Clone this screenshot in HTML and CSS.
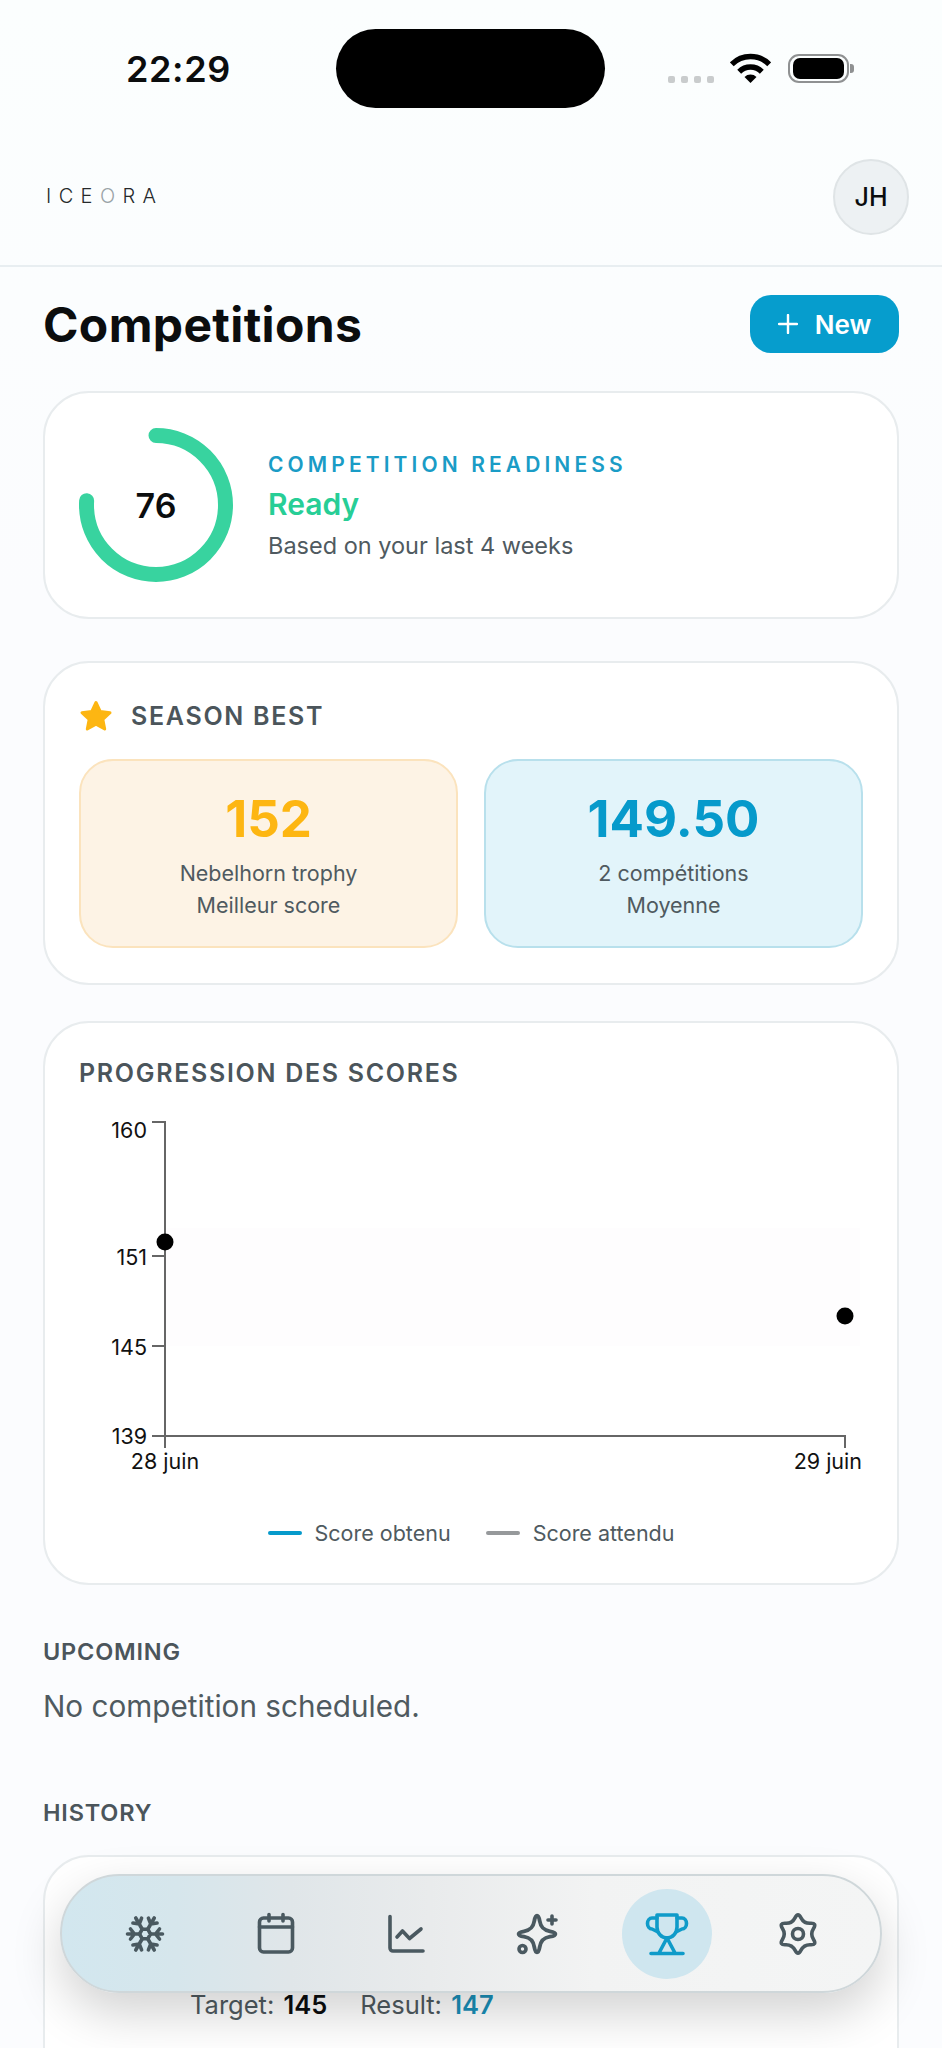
FILE: index.html
```html
<!DOCTYPE html>
<html lang="fr">
<head>
  <meta charset="UTF-8">
  <meta name="viewport" content="width=device-width, initial-scale=1.0">
  <title>Competitions</title>
  <link rel="stylesheet" href="styles.css">
</head>
<body>
  <div class="status-bar">
    <span class="status-time">22:29</span>
    <div class="status-island"></div>
    <div class="status-icons">
      <div class="signal-dots"><i></i><i></i><i></i><i></i></div>
      <svg class="wifi" width="41" height="30" viewBox="0 0 41 30">
        <path d="M1.76 11.26A26.5 26.5 0 0 1 39.24 11.26M9.19 18.69A16 16 0 0 1 31.81 18.69" fill="none" stroke="#000" stroke-width="5.5"/>
        <path d="M20.5 30L14.5 24A8.5 8.5 0 0 1 26.5 24Z" fill="#000"/>
      </svg>
      <div class="battery"><div class="battery-level"></div></div>
      <div class="battery-cap"></div>
    </div>
  </div>

  <header class="app-header">
    <div class="logo">ICE<span class="logo-o">O</span>RA</div>
    <div class="avatar">JH</div>
  </header>

  <main class="content">
    <div class="title-row">
      <h1>Competitions</h1>
      <button class="new-btn" type="button">
        <svg width="20" height="20" viewBox="0 0 20 20"><path d="M10 1V19M1 10H19" stroke="#fff" stroke-width="2.4" stroke-linecap="round"/></svg>
        New
      </button>
    </div>

    <section class="card readiness">
      <div class="ring">
        <svg width="154" height="154" viewBox="0 0 154 154">
          <circle class="ring-arc" cx="77" cy="77" r="69.5" pathLength="100" stroke-dasharray="76 100" transform="rotate(-90 77 77)"/>
        </svg>
        <span class="ring-value">76</span>
      </div>
      <div class="readiness-text">
        <div class="readiness-label">COMPETITION READINESS</div>
        <div class="readiness-status">Ready</div>
        <div class="readiness-note">Based on your last 4 weeks</div>
      </div>
    </section>

    <section class="card season">
      <div class="card-title season-title">
        <svg width="34" height="32" viewBox="0 0 34 32"><path d="M17 2.5L21.2 11.4L31 12.7L23.8 19.4L25.7 29L17 24.3L8.3 29L10.2 19.4L3 12.7L12.8 11.4Z" fill="#fdb612" stroke="#fdb612" stroke-width="3" stroke-linejoin="round"/></svg>
        SEASON BEST
      </div>
      <div class="best-grid">
        <div class="best-box best-orange">
          <div class="best-num">152</div>
          <div class="best-sub">Nebelhorn trophy</div>
          <div class="best-sub">Meilleur score</div>
        </div>
        <div class="best-box best-blue">
          <div class="best-num">149.50</div>
          <div class="best-sub">2 compétitions</div>
          <div class="best-sub">Moyenne</div>
        </div>
      </div>
    </section>

    <section class="card progress">
      <div class="card-title">PROGRESSION DES SCORES</div>
      <svg class="chart" width="784" height="378" viewBox="0 0 784 378">
        <rect x="86" y="128" width="695" height="118" fill="#fefdfe"/>
        <path d="M73 22H86V336H766V348M73 156H86M73 246H86M73 336H86M86 336V348" fill="none" stroke="#666" stroke-width="2"/>
        <circle cx="86" cy="142" r="8.5" fill="#000"/>
        <circle cx="766" cy="216" r="8.5" fill="#000"/>
        <text x="68" y="38" text-anchor="end">160</text>
        <text x="68" y="165" text-anchor="end">151</text>
        <text x="68" y="255" text-anchor="end">145</text>
        <text x="68" y="344" text-anchor="end">139</text>
        <text x="86" y="369" text-anchor="middle">28 juin</text>
        <text x="783" y="369" text-anchor="end">29 juin</text>
      </svg>
      <div class="legend">
        <div class="legend-item"><i class="legend-line line-blue"></i>Score obtenu</div>
        <div class="legend-item"><i class="legend-line line-gray"></i>Score attendu</div>
      </div>
    </section>

    <h2 class="section-title upcoming-title">UPCOMING</h2>
    <p class="empty-note">No competition scheduled.</p>

    <h2 class="section-title history-title">HISTORY</h2>
    <section class="card history">
      <div class="history-line">
        <span>Target: <b>145</b></span>
        <span>Result: <b class="result">147</b></span>
      </div>
    </section>
  </main>

  <nav class="tab-bar">
    <div class="tab">
      <svg width="44" height="44" viewBox="0 0 44 44" class="tab-icon">
        <g transform="rotate(90 22 22)">
          <path d="M22 16.5L26.8 19.25V24.75L22 27.5L17.2 24.75V19.25Z"/>
          <path d="M22 16.500V4.500M17 7.500L22 11.500L27 7.500"/>
          <path transform="rotate(60 22 22)" d="M22 16.500V3.500M17 6.500L22 10.500L27 6.500"/>
          <path transform="rotate(120 22 22)" d="M22 16.500V3.500M17 6.500L22 10.500L27 6.500"/>
          <path transform="rotate(180 22 22)" d="M22 16.500V4.500M17 7.500L22 11.500L27 7.500"/>
          <path transform="rotate(240 22 22)" d="M22 16.500V3.500M17 6.500L22 10.500L27 6.500"/>
          <path transform="rotate(300 22 22)" d="M22 16.500V3.500M17 6.500L22 10.500L27 6.500"/>
        </g>
      </svg>
    </div>
    <div class="tab">
      <svg width="44" height="44" viewBox="0 0 44 44" class="tab-icon">
        <rect x="5.5" y="6" width="33" height="34" rx="4"/>
        <path d="M5.5 15H38.5M15 2.5V9M29 2.5V9"/>
      </svg>
    </div>
    <div class="tab">
      <svg width="44" height="44" viewBox="0 0 44 44" class="tab-icon">
        <path d="M6 4.5V36A3 3 0 0 0 9 39H39"/>
        <path d="M13 25L18.5 19L25.5 26.5L37 17"/>
      </svg>
    </div>
    <div class="tab">
      <svg width="44" height="44" viewBox="0 0 44 44" class="tab-icon">
        <path d="M21 6C22.500 6 23 8 23.500 11C24.500 17 27 19.500 33 20.500C36 21 38 21.500 38 23S36 25 33 25.500C27 26.500 24.500 29 23.500 35C23 38 22.500 40 21 40S19 38 18.500 35C17.500 29 15 26.500 9 25.500C6 25 4 24.500 4 23S6 21 9 20.500C15 19.500 17.500 17 18.500 11C19 8 19.500 6 21 6Z" transform="translate(22 22) scale(1.08) translate(-21 -23)"/>
        <path d="M37 4V12M33 8H41"/>
        <circle cx="7.500" cy="37" r="3.500"/>
      </svg>
    </div>
    <div class="tab tab-active">
      <svg width="44" height="44" viewBox="0 0 44 44" class="tab-icon">
        <path d="M12 3H32V15A10 11 0 0 1 12 15Z"/>
        <path d="M12 6H7A4.500 5.500 0 0 0 7 17L13 20M32 6H37A4.500 5.500 0 0 1 37 17L31 20"/>
        <path d="M22 26L14 41M22 26L30 41M6 41.500H38"/>
      </svg>
    </div>
    <div class="tab">
      <svg width="44" height="44" viewBox="0 0 44 44" class="tab-icon">
        <path transform="translate(22 22)" d="M3 -16.2Q6 -10.39 12.53 -10.7Q19.05 -11 15.53 -5.5Q12 0 15.53 5.5Q19.05 11 12.53 10.7Q6 10.39 3 16.2Q0 22 -3 16.2Q-6 10.39 -12.53 10.7Q-19.05 11 -15.53 5.5Q-12 0 -15.53 -5.5Q-19.05 -11 -12.53 -10.7Q-6 -10.39 -3 -16.2Q0 -22 3 -16.2Z"/>
        <circle cx="22" cy="22" r="5.500"/>
      </svg>
    </div>
  </nav>
</body>
</html>
```

FILE: styles.css
```css
html, body {
  height: 2048px;
  overflow: hidden;
}

body {
  margin: 0;
  position: relative;
  background: linear-gradient(180deg, #fbfefe 0, #fbfcfe 600px);
  font-family: Inter, "Noto Sans", sans-serif;
  color: #0b0d0e;
}

/* status bar */
.status-bar {
  height: 121px;
  display: grid;
  grid-template-columns: 336px 269px 1fr;
  box-sizing: border-box;
  padding-top: 29px;
}

.status-time {
  padding-left: 126px;
  font-size: 36px;
  font-weight: 600;
  line-height: 80px;
  letter-spacing: 0.6px;
}

.status-island {
  height: 79px;
  border-radius: 40px;
  background-color: #000;
}

.status-icons {
  display: flex;
  align-items: flex-end;
  height: 54px;
  padding-left: 63px;
}

.signal-dots {
  display: flex;
  gap: 6px;
}

.signal-dots i {
  width: 7px;
  height: 7px;
  border-radius: 2px;
  background-color: #c9cccd;
}

.wifi {
  margin-left: 16px;
}

.battery {
  margin-left: 17px;
  width: 61px;
  height: 29px;
  box-sizing: border-box;
  padding: 2px 3px;
  border: 2px solid #8f9192;
  border-radius: 11px;
}

.battery-level {
  height: 100%;
  border-radius: 7px;
  background-color: #000;
}

.battery-cap {
  width: 4px;
  height: 9px;
  margin: 0 0 10px 1px;
  border-radius: 0 3px 3px 0;
  background-color: #8f9192;
}

/* header */
.app-header {
  height: 146px;
  box-sizing: border-box;
  padding: 8px 33px 0 46px;
  display: flex;
  justify-content: space-between;
  align-items: center;
  border-bottom: 2px solid #e8eef1;
}

.logo {
  font-size: 20px;
  font-weight: 300;
  letter-spacing: 7.4px;
  color: #25292b;
  margin-top: -2px;
}

.logo-o {
  color: #9aa3a7;
}

.avatar {
  width: 76px;
  height: 76px;
  box-sizing: border-box;
  border: 2px solid #dfe4e6;
  border-radius: 50%;
  background-color: #edf1f3;
  display: flex;
  align-items: center;
  justify-content: center;
  font-size: 25px;
  font-weight: 500;
}

/* page */
.content {
  padding: 28px 43px 0;
}

.title-row {
  height: 58px;
  display: flex;
  justify-content: space-between;
  align-items: center;
}

h1 {
  margin: 0;
  font-size: 48px;
  font-weight: 700;
  letter-spacing: 0.35px;
}

.new-btn {
  width: 149px;
  height: 58px;
  border: none;
  border-radius: 21px;
  background-color: #069dcd;
  color: #fff;
  font-family: inherit;
  font-size: 26px;
  font-weight: 600;
  display: flex;
  align-items: center;
  justify-content: center;
  gap: 17px;
}

.card {
  box-sizing: border-box;
  border: 2px solid #e8ecee;
  border-radius: 46px;
  background-color: #fff;
}

.card-title {
  font-size: 25px;
  font-weight: 600;
  line-height: 30px;
  letter-spacing: 1.7px;
  color: #4b555b;
}

/* readiness */
.readiness {
  margin-top: 38px;
  height: 228px;
  padding: 0 34px;
  display: flex;
  align-items: center;
  gap: 35px;
}

.ring {
  position: relative;
  width: 154px;
  height: 154px;
}

.ring-arc {
  fill: none;
  stroke: #38d39f;
  stroke-width: 15;
  stroke-linecap: round;
}

.ring-value {
  position: absolute;
  inset: 0;
  display: flex;
  align-items: center;
  justify-content: center;
  font-size: 34px;
  font-weight: 600;
}

.readiness-text {
  padding-top: 3px;
}

.readiness-label {
  font-size: 21px;
  font-weight: 600;
  line-height: 28px;
  letter-spacing: 4.1px;
  color: #1a9cc6;
}

.readiness-status {
  margin-top: 7px;
  font-size: 30px;
  font-weight: 600;
  line-height: 36px;
  color: #27ce96;
}

.readiness-note {
  margin-top: 8px;
  font-size: 23.5px;
  line-height: 32px;
  color: #4f5a60;
}

/* season best */
.season {
  margin-top: 42px;
  padding: 37px 34px 35px;
}

.season-title {
  display: flex;
  align-items: center;
  gap: 18px;
}

.best-grid {
  margin-top: 27px;
  display: grid;
  grid-template-columns: 1fr 1fr;
  gap: 26px;
}

.best-box {
  box-sizing: border-box;
  height: 189px;
  padding-top: 28px;
  border-radius: 34px;
  border: 2px solid;
  text-align: center;
}

.best-orange {
  background-color: #fdf3e5;
  border-color: #fbe3bd;
  color: #fdb612;
}

.best-blue {
  background-color: #e2f4fa;
  border-color: #b8e0ec;
  color: #069acb;
}

.best-num {
  font-size: 51px;
  font-weight: 700;
  line-height: 60px;
  margin-bottom: 8px;
}

.best-sub {
  font-size: 21.5px;
  line-height: 32px;
  color: #4f5a60;
}

/* chart */
.progress {
  margin-top: 36px;
  height: 564px;
  padding: 35px 34px 0;
}

.chart {
  display: block;
  margin-top: 12px;
  overflow: visible;
}

.chart text {
  font-size: 21.5px;
  fill: #111;
}

.legend {
  margin-top: 41px;
  display: flex;
  justify-content: center;
  gap: 35px;
}

.legend-item {
  display: flex;
  align-items: center;
  gap: 13px;
  font-size: 21.5px;
  line-height: 28px;
  color: #4f5a60;
}

.legend-line {
  width: 34px;
  height: 4px;
  border-radius: 2px;
}

.line-blue {
  background-color: #069acb;
}

.line-gray {
  background-color: #96999b;
}

/* lists */
.section-title {
  margin: 0;
  font-size: 23.5px;
  font-weight: 600;
  line-height: 30px;
  letter-spacing: 0.8px;
  color: #4b555b;
}

.upcoming-title {
  margin-top: 52px;
}

.empty-note {
  margin: 21px 0 0;
  font-size: 29.7px;
  line-height: 36px;
  color: #4f5a60;
}

.history-title {
  margin-top: 74px;
}

.history {
  margin-top: 27px;
  height: 300px;
  padding: 132px 0 0 145px;
}

.history-line {
  display: flex;
  gap: 33px;
  font-size: 25.5px;
  line-height: 32px;
  color: #4f5a60;
}

.history-line b {
  font-weight: 600;
  color: #0b0d0e;
  margin-left: 2px;
}

.history-line .result {
  color: #1a8fb8;
}

/* bottom tabs, floats over the page */
.tab-bar {
  position: absolute;
  left: 60px;
  right: 60px;
  bottom: 55px;
  height: 119px;
  box-sizing: border-box;
  padding: 0 17px 0 18px;
  display: grid;
  grid-template-columns: repeat(6, 1fr);
  align-items: center;
  justify-items: center;
  border: 2px solid #cfd7da;
  border-radius: 60px;
  background: linear-gradient(90deg, #d2e7ef 0, #d6e6ec 14%, #e0e6e9 28%, #e9ebec 45%, #f2f3f3 65%, #f4f5f5 100%);
  box-shadow: 0 20px 50px rgba(0, 0, 0, 0.18);
}

.tab {
  width: 90px;
  height: 90px;
  border-radius: 50%;
  display: flex;
  align-items: center;
  justify-content: center;
}

.tab-icon {
  fill: none;
  stroke: #4a5960;
  stroke-width: 3.6;
  stroke-linecap: round;
  stroke-linejoin: round;
}

.tab-active {
  background-color: #cfe6ef;
}

.tab-active svg {
  stroke: #0f9bc9;
}
```
